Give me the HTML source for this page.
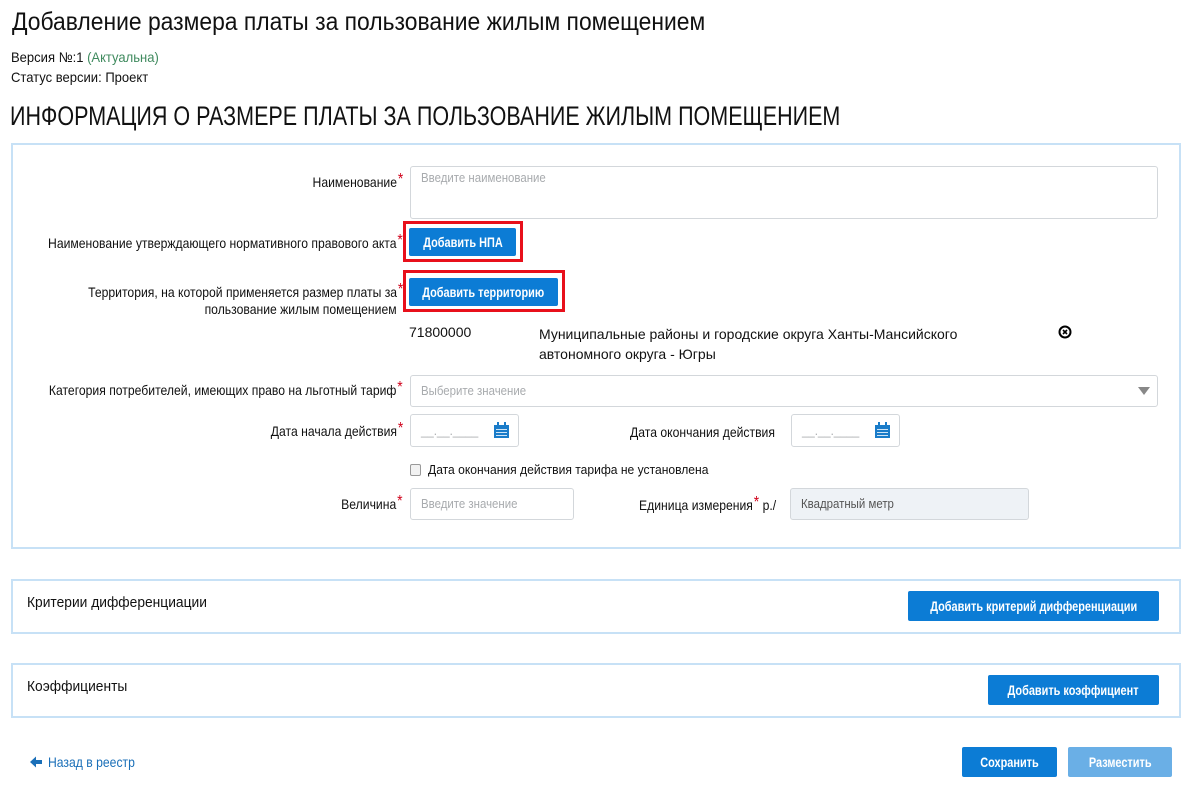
<!DOCTYPE html>
<html><head><meta charset="utf-8"><style>
*{box-sizing:border-box;margin:0;padding:0}
body{width:1193px;height:796px;background:#fff;font-family:"Liberation Sans",sans-serif;color:#111;position:relative;overflow:hidden}
.a{position:absolute;white-space:nowrap}
.panel{position:absolute;left:11px;width:1170px;border:2px solid #c7e1f6}
.lbl{position:absolute;right:790px;font-size:14px;text-align:right;white-space:nowrap;transform:scaleX(.87);transform-origin:right top}
.st{color:#d0021b;font-size:16px;position:relative;top:-3px;margin-left:1px}
.inp{position:absolute;border:1px solid #d3d7db;border-radius:3px;background:#fff;font-size:13px;color:#a8abae;padding-left:10px}
.inp span{display:inline-block;transform:scaleX(.88);transform-origin:left}
.btn{position:absolute;background:#0c7cd5;color:#fff;font-size:14px;font-weight:bold;border-radius:2px;white-space:nowrap;display:flex;justify-content:center;align-items:center}
.btn span{display:block;flex:none;transform:scaleX(.78);transform-origin:center}
.red{position:absolute;border:3px solid #e8101b}
.n{display:inline-block;transform-origin:left top}
</style></head><body>
<div class="a" style="left:12px;top:8px;font-size:25px"><span class="n" style="transform:scaleX(.915)">Добавление размера платы за пользование жилым помещением</span></div>
<div class="a" style="left:11px;top:49px;font-size:14px"><span class="n" style="transform:scaleX(.93)">Версия №:1 <span style="color:#3f8a5e">(Актуальна)</span></span></div>
<div class="a" style="left:11px;top:69px;font-size:14px"><span class="n" style="transform:scaleX(.93)">Статус версии: Проект</span></div>
<div class="a" style="left:10px;top:101px;font-size:27px"><span class="n" style="transform:scaleX(.797)">ИНФОРМАЦИЯ О РАЗМЕРЕ ПЛАТЫ ЗА ПОЛЬЗОВАНИЕ ЖИЛЫМ ПОМЕЩЕНИЕМ</span></div>

<div class="panel" style="top:143px;height:406px"></div>
<div class="lbl" style="top:174px">Наименование<span class="st">*</span></div>
<div class="inp" style="left:410px;top:166px;width:748px;height:53px;padding-top:3px"><span>Введите наименование</span></div>
<div class="lbl" style="top:235px">Наименование утверждающего нормативного правового акта<span class="st">*</span></div>
<div class="red" style="left:403px;top:221px;width:120px;height:41px"></div>
<div class="btn" style="left:409px;top:228px;width:107px;height:28px"><span>Добавить НПА</span></div>
<div class="lbl" style="top:284px;line-height:16px">Территория, на которой применяется размер платы за<span class="st">*</span><br>пользование жилым помещением&nbsp;&nbsp;</div>
<div class="red" style="left:403px;top:270px;width:162px;height:42px"></div>
<div class="btn" style="left:409px;top:278px;width:149px;height:28px"><span>Добавить территорию</span></div>
<div class="a" style="left:409px;top:324px;font-size:14px">71800000</div>
<div class="a" style="left:539px;top:324px;font-size:14px;line-height:20px">Муниципальные районы и городские округа Ханты-Мансийского<br>автономного округа - Югры</div>
<svg class="a" style="left:1058px;top:325px" width="14" height="14" viewBox="0 0 14 14"><circle cx="7" cy="7" r="5.5" fill="none" stroke="#000" stroke-width="2"/><path d="M5 5L9 9M9 5L5 9" stroke="#000" stroke-width="1.6"/></svg>
<div class="lbl" style="top:382px">Категория потребителей, имеющих право на льготный тариф<span class="st">*</span></div>
<div class="inp" style="left:410px;top:375px;width:748px;height:32px;line-height:30px"><span>Выберите значение</span></div>
<div class="a" style="left:1138px;top:387px;width:0;height:0;border-left:6px solid transparent;border-right:6px solid transparent;border-top:8px solid #888"></div>
<div class="lbl" style="top:423px">Дата начала действия<span class="st">*</span></div>
<div class="inp" style="left:410px;top:414px;width:109px;height:33px;line-height:31px"><span>__.__.____</span></div>
<svg class="a" style="left:494px;top:422px" width="15" height="16"><rect x="0" y="3" width="15" height="13" fill="#1a7cc9"/><rect x="3" y="0" width="2" height="4" fill="#1a7cc9"/><rect x="10" y="0" width="2" height="4" fill="#1a7cc9"/><g fill="#cfe5f7"><rect x="2" y="7" width="11" height="1"/><rect x="2" y="10" width="11" height="1"/><rect x="2" y="13" width="11" height="1"/></g></svg>
<div class="a" style="left:630px;top:424px;font-size:14px"><span class="n" style="transform:scaleX(.87)">Дата окончания действия</span></div>
<div class="inp" style="left:791px;top:414px;width:109px;height:33px;line-height:31px"><span>__.__.____</span></div>
<svg class="a" style="left:875px;top:422px" width="15" height="16"><rect x="0" y="3" width="15" height="13" fill="#1a7cc9"/><rect x="3" y="0" width="2" height="4" fill="#1a7cc9"/><rect x="10" y="0" width="2" height="4" fill="#1a7cc9"/><g fill="#cfe5f7"><rect x="2" y="7" width="11" height="1"/><rect x="2" y="10" width="11" height="1"/><rect x="2" y="13" width="11" height="1"/></g></svg>
<div class="a" style="left:410px;top:464px;width:11px;height:12px;border:1px solid #999;border-radius:2px;background:#f2f2f2"></div>
<div class="a" style="left:428px;top:462px;font-size:13px"><span class="n" style="transform:scaleX(.93)">Дата окончания действия тарифа не установлена</span></div>
<div class="lbl" style="top:496px">Величина<span class="st">*</span></div>
<div class="inp" style="left:410px;top:488px;width:164px;height:32px;line-height:30px"><span>Введите значение</span></div>
<div class="a" style="left:639px;top:497px;font-size:14px"><span class="n" style="transform:scaleX(.87)">Единица измерения<span class="st">*</span> р./</span></div>
<div class="inp" style="left:790px;top:488px;width:239px;height:32px;line-height:30px;background:#eef2f6;color:#555"><span>Квадратный метр</span></div>

<div class="panel" style="top:579px;height:55px"></div>
<div class="a" style="left:27px;top:594px;font-size:15px"><span class="n" style="transform:scaleX(.92)">Критерии дифференциации</span></div>
<div class="btn" style="left:908px;top:591px;width:251px;height:30px"><span>Добавить критерий дифференциации</span></div>
<div class="panel" style="top:663px;height:55px"></div>
<div class="a" style="left:27px;top:678px;font-size:15px"><span class="n" style="transform:scaleX(.92)">Коэффициенты</span></div>
<div class="btn" style="left:988px;top:675px;width:171px;height:30px"><span>Добавить коэффициент</span></div>

<svg class="a" style="left:30px;top:756px" width="12" height="12" viewBox="0 0 12 12"><path d="M0 6L6 0.5V4H12V8H6V11.5Z" fill="#1a6fb8"/></svg>
<div class="a" style="left:48px;top:754px;font-size:14px;color:#1a6fb8"><span class="n" style="transform:scaleX(.87)">Назад в реестр</span></div>
<div class="btn" style="left:962px;top:747px;width:95px;height:30px"><span>Сохранить</span></div>
<div class="btn" style="left:1068px;top:747px;width:104px;height:30px;background:#6aafe6"><span>Разместить</span></div>
</body></html>
